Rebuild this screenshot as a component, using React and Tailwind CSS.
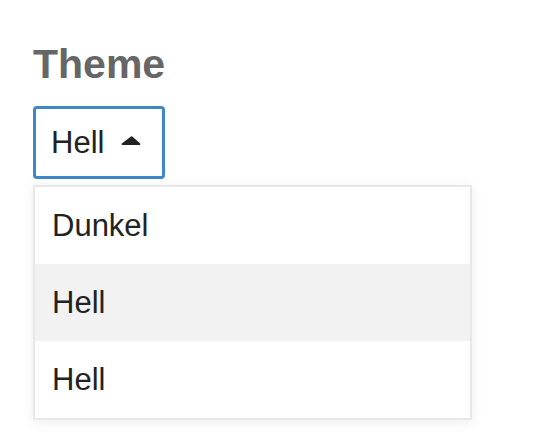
import React from "react";

const options = [
  { label: "Dunkel", active: false },
  { label: "Hell", active: true },
  { label: "Hell", active: false },
];

const CaretUp = () => (
  <svg width="20" height="9" viewBox="0 0 20 9" className="fill-[#222]">
    <path d="M10 0.6 Q10.6 0 11.3 0.6 L19.2 7.4 Q20 8.6 18.6 9 L1.4 9 Q0 8.6 0.8 7.4 Z" />
  </svg>
);

export default function App() {
  return (
    <div className="min-h-screen bg-white pl-[33px] pt-[44px] font-['Liberation_Sans',Arial,sans-serif]">
      <h2 className="text-[41px] font-bold leading-none text-[#666]">Theme</h2>
      <div className="mt-[21px] flex flex-col items-start">
        <button
          type="button"
          className="flex h-[73px] w-[132px] items-center rounded-[4px] border-[3px] border-[#3f87c8] bg-white pl-[15px] text-[31px] text-[#222]"
        >
          <span className="leading-none">Hell</span>
          <span className="ml-[17px] mt-[-4px]">
            <CaretUp />
          </span>
        </button>
        <ul className="mt-[6px] w-[439px] border-2 border-[#e8e8e8] bg-white shadow-[0_2px_12px_rgba(0,0,0,0.08)]">
          {options.map((o, i) => (
            <li
              key={i}
              className={
                "flex h-[77px] items-center pl-[17px] text-[31px] leading-none text-[#222] " +
                (o.active ? "bg-[#f2f2f2]" : "bg-white")
              }
            >
              {o.label}
            </li>
          ))}
        </ul>
      </div>
    </div>
  );
}
